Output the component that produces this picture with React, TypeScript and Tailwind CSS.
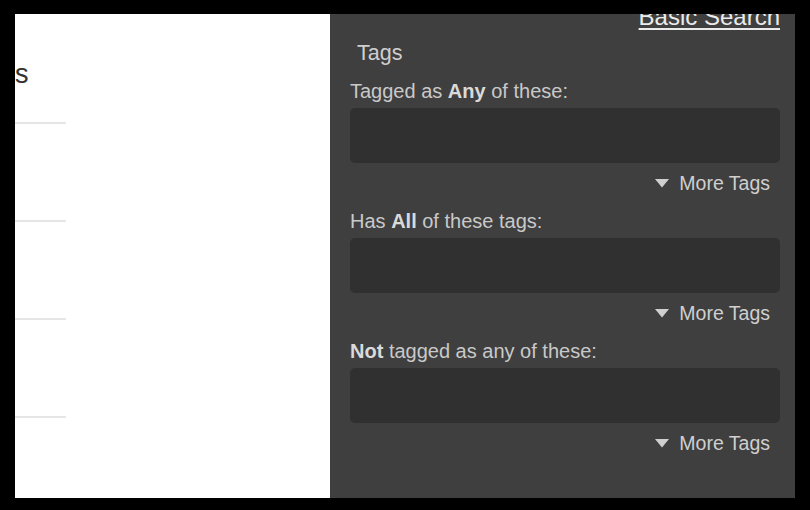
import React from "react";

const font = { fontFamily: '"Liberation Sans", Arial, sans-serif' };

function Caret() {
  return (
    <svg width="14" height="9" viewBox="0 0 14 9" className="block">
      <path d="M0 0 L14 0 L7 8.5 Z" fill="#cfcfcf" />
    </svg>
  );
}

function Group({ label }: { label: React.ReactNode }) {
  return (
    <div className="mt-[14px]">
      <div className="h-[24px] text-[20px] leading-[24px] text-[#c9c9c9]">{label}</div>
      <div className="mt-[5px] h-[55px] rounded-[5px] bg-[#303030]" />
      <div className="mt-[8px] flex h-[24px] items-center justify-end gap-[10px] pr-[10px] text-[19.5px] leading-[24px] text-[#cfcfcf]">
        <Caret />
        <span>More Tags</span>
      </div>
    </div>
  );
}

export default function App() {
  return (
    <div className="h-[510px] w-[810px] bg-black pt-[14px] pl-[15px] pr-[15px] pb-[12px]" style={font}>
      <div className="flex h-[484px] w-[780px]">
        <div className="h-full w-[315px] overflow-hidden bg-white">
          <div className="mt-[43px] h-[34px] text-[27px] leading-[34px] text-[#333]">s</div>
          <div className="mt-[31px] flex flex-col gap-[96px]">
            <div className="h-[2px] w-[51px] bg-[#e6e6e6]" />
            <div className="h-[2px] w-[51px] bg-[#e6e6e6]" />
            <div className="h-[2px] w-[51px] bg-[#e6e6e6]" />
            <div className="h-[2px] w-[51px] bg-[#e6e6e6]" />
          </div>
        </div>
        <div className="h-full w-[465px] overflow-hidden bg-[#3f3f3f] pl-[20px] pr-[15px]">
          <div className="-mt-[9px] flex h-[24px] justify-end text-[24px] leading-[24px]">
            <span className="text-[#ebebeb] underline decoration-[2px] underline-offset-[3px]">Basic Search</span>
          </div>
          <div className="mt-[12px] h-[24px] pl-[7px] text-[21.5px] leading-[24px] text-[#cfcfcf]">Tags</div>
          <div>
            <Group label={<>Tagged as <b className="text-[#dadada]">Any</b> of these:</>} />
            <Group label={<>Has <b className="text-[#dadada]">All</b> of these tags:</>} />
            <Group label={<><b className="text-[#dadada]">Not</b> tagged as any of these:</>} />
          </div>
        </div>
      </div>
    </div>
  );
}
